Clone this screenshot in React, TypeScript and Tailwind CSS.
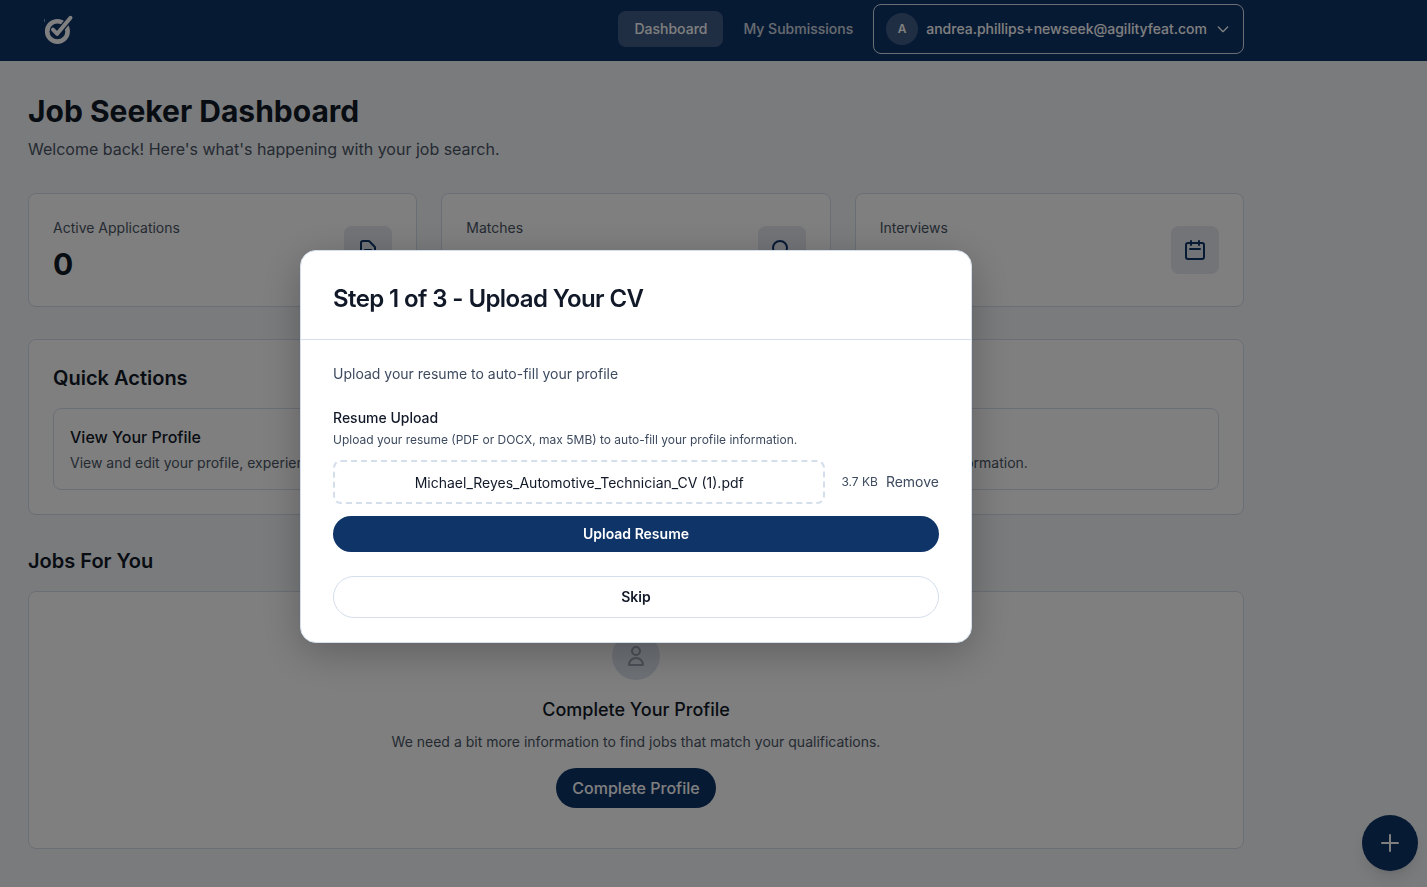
import { useState } from "react";
import type { ReactNode } from "react";

const Icon = ({ d, className }: { d: string; className: string }) => {
  return (
    <svg
      className={className}
      viewBox="0 0 24 24"
      fill="none"
      stroke="currentColor"
      strokeWidth={2}
      strokeLinecap="round"
      strokeLinejoin="round"
      aria-hidden="true"
    >
      <path d={d} />
    </svg>
  );
};

const paths = {
  document:
    "M9 12h6m-6 4h6m2 5H7a2 2 0 01-2-2V5a2 2 0 012-2h5.586a1 1 0 01.707.293l5.414 5.414a1 1 0 01.293.707V19a2 2 0 01-2 2z",
  search: "M21 21l-6-6m2-5a7 7 0 11-14 0 7 7 0 0114 0z",
  calendar:
    "M8 7V3m8 4V3m-9 8h10M5 21h14a2 2 0 002-2V7a2 2 0 00-2-2H5a2 2 0 00-2 2v12a2 2 0 002 2z",
  user: "M16 7a4 4 0 11-8 0 4 4 0 018 0zM12 14a7 7 0 00-7 7h14a7 7 0 00-7-7z",
  chevron: "M19 9l-7 7-7-7",
  plus: "M12 4v16m8-8H4",
};

const Logo = () => {
  return (
    <svg className="w-8 h-8" viewBox="0 0 32 32" fill="none" stroke="white">
      <path d="M0.5 6v3" strokeOpacity="0.5" />
      <circle cx="13.4" cy="18.4" r="10.2" strokeWidth="4.6" />
      <path d="M8.6 16.6l4.6 4.6L26.5 4.5" stroke="#0f3468" strokeWidth="6.4" />
      <path d="M9 16.6l4.2 4.2L26.5 4.8" strokeWidth="4" strokeLinecap="round" strokeLinejoin="round" />
    </svg>
  );
};

const Header = () => {
  return (
    <header className="bg-[#0f3468]">
      <div className="max-w-[1272px] px-7 pt-1 pb-[7px] flex items-center justify-between">
        <a href="#" aria-label="Home" className="ml-4">
          <Logo />
        </a>
        <nav className="flex items-center gap-1 text-sm font-medium">
          <a href="#" className="bg-white/20 text-white rounded-lg px-4 py-2">
            Dashboard
          </a>
          <a href="#" className="text-white/80 px-4 py-2">
            My Submissions
          </a>
          <button className="flex items-center gap-2 border border-[#d5dfec] rounded-lg px-3 py-2 text-white">
            <span className="w-8 h-8 rounded-full bg-white/20 flex items-center justify-center text-xs font-semibold">
              A
            </span>
            andrea.phillips+newseek@agilityfeat.com
            <Icon d={paths.chevron} className="w-4 h-4" />
          </button>
        </nav>
      </div>
    </header>
  );
};

const Card = ({ className, children }: { className: string; children: ReactNode }) => {
  return (
    <div className={`bg-white border border-[#d5dfec] rounded-lg ${className}`}>
      {children}
    </div>
  );
};

const stats = [
  { label: "Active Applications", value: 0, icon: paths.document },
  { label: "Matches", value: 0, icon: paths.search },
  { label: "Interviews", value: 0, icon: paths.calendar },
];

const UploadDialog = () => {
  const [file, setFile] = useState("Michael_Reyes_Automotive_Technician_CV (1).pdf");

  return (
    <div className="fixed inset-0 bg-black/50">
      <div className="max-w-[1272px] h-full pt-1.5 flex items-center justify-center">
        <div
          role="dialog"
          aria-modal="true"
          aria-labelledby="dialog-title"
          className="w-full max-w-2xl bg-white border border-[#d5dfec] rounded-2xl shadow-[0_10px_40px_rgba(0,0,0,0.25)]"
        >
          <div className="px-8 pt-8 pb-6 border-b border-[#d5dfec]">
            <h2 id="dialog-title" className="text-2xl font-semibold tracking-tight">
              Step 1 of 3 - Upload Your CV
            </h2>
          </div>
          <div className="px-8 py-6 text-sm">
            <p className="text-[#3d4a5f]">Upload your resume to auto-fill your profile</p>
            <h3 className="mt-6 font-medium">Resume Upload</h3>
            <p className="mt-1 text-xs text-[#3d4a5f]">
              Upload your resume (PDF or DOCX, max 5MB) to auto-fill your profile information.
            </p>
            <div className="mt-3 flex items-center gap-4">
              <label className="flex-1 h-11 pt-0.5 border-2 border-dashed border-[#d5dfec] rounded-lg flex items-center justify-center cursor-pointer">
                {file || "Choose a file"}
                <input
                  type="file"
                  className="sr-only"
                  onChange={(e) => setFile(e.target.files?.[0]?.name ?? "")}
                />
              </label>
              <div className="flex items-center gap-2 text-[#3d4a5f]">
                <span className="text-xs">3.7 KB</span>
                <button onClick={() => setFile("")}>Remove</button>
              </div>
            </div>
            <button className="mt-3 w-full h-9 rounded-full bg-[#0f3468] text-white font-semibold">
              Upload Resume
            </button>
            <button className="mt-6 w-full h-[42px] rounded-full border border-[#d5dfec] font-semibold">
              Skip
            </button>
          </div>
        </div>
      </div>
    </div>
  );
};

const App = () => {
  return (
    <div className="min-h-screen bg-[#f4f6fa] text-[#111827] font-['Inter',sans-serif]">
      <Header />
      <main className="max-w-[1272px] px-7 py-8">
        <h1 className="text-3xl font-bold">Job Seeker Dashboard</h1>
        <p className="mt-2 text-gray-600">
          Welcome back! Here's what's happening with your job search.
        </p>

        <div className="mt-8 grid grid-cols-3 gap-6">
          {stats.map((stat) => (
            <Card key={stat.label} className="p-6 flex items-center justify-between">
              <div>
                <p className="text-sm text-gray-600">{stat.label}</p>
                <p className="mt-2 text-3xl font-bold">{stat.value}</p>
              </div>
              <div className="w-12 h-12 rounded-lg bg-[#e4e8f0] text-[#0f3468] flex items-center justify-center">
                <Icon d={stat.icon} className="w-6 h-6" />
              </div>
            </Card>
          ))}
        </div>

        <Card className="mt-8 p-6">
          <h2 className="text-xl font-semibold">Quick Actions</h2>
          <a href="#" className="mt-4 block border border-[#d5dfec] rounded-lg p-4">
            <h3 className="font-medium">View Your Profile</h3>
            <p className="mt-1 text-sm text-gray-600">
              View and edit your profile, experience, education, skills, certifications, work
              preferences, photos, contact details, and other personal information.
            </p>
          </a>
        </Card>

        <h2 className="mt-8 text-xl font-semibold">Jobs For You</h2>
        <Card className="mt-4 p-10 flex flex-col items-center">
          <div className="w-12 h-12 rounded-full bg-[#dce4ee] text-gray-400 flex items-center justify-center">
            <Icon d={paths.user} className="w-6 h-6" />
          </div>
          <h3 className="mt-4 text-lg font-medium">Complete Your Profile</h3>
          <p className="mt-2 text-sm text-gray-600">
            We need a bit more information to find jobs that match your qualifications.
          </p>
          <button className="mt-4 h-10 px-4 rounded-full bg-[#0f3468] text-white font-medium">
            Complete Profile
          </button>
        </Card>
      </main>

      <button
        aria-label="Add"
        className="fixed bottom-4 right-[9px] w-14 h-14 rounded-full bg-[#0f3468] text-white shadow-lg flex items-center justify-center"
      >
        <Icon d={paths.plus} className="w-6 h-6" />
      </button>

      <UploadDialog />
    </div>
  );
};

export default App;
